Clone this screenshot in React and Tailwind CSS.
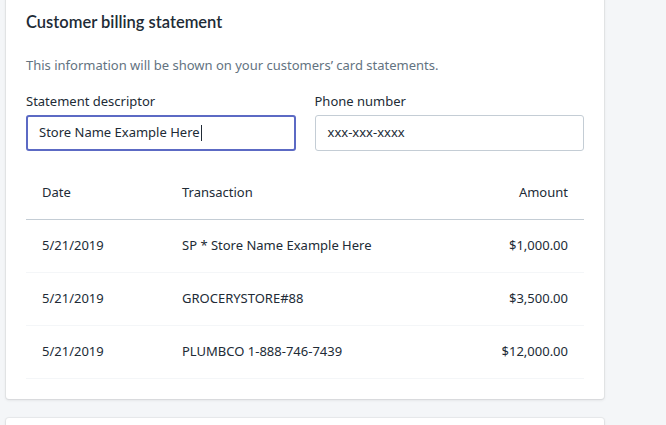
import React from 'react';

const rows = [
  { date: '5/21/2019', tx: 'SP * Store Name Example Here', amount: '$1,000.00' },
  { date: '5/21/2019', tx: 'GROCERYSTORE#88', amount: '$3,500.00' },
  { date: '5/21/2019', tx: 'PLUMBCO 1-888-746-7439', amount: '$12,000.00' },
];

function App() {
  return (
    <div
      className="h-screen bg-[#f4f6f8] overflow-hidden text-[#212b36]"
      style={{ fontFamily: '"Noto Sans", "Open Sans", sans-serif' }}
    >
      <div className="ml-[6px] w-[598px] -mt-[8px] bg-white rounded-[3px] shadow-[0_0_0_1px_rgba(63,63,68,0.05),0_1px_3px_0_rgba(63,63,68,0.15)] px-5 pt-5 pb-5">
        <h2 className="text-[16.5px] leading-5 font-semibold" style={{ fontFamily: 'Lato, "Noto Sans", sans-serif' }}>
          Customer billing statement
        </h2>
        <p className="mt-[23px] text-[13px] leading-5 text-[#637381]">
          This information will be shown on your customers’ card statements.
        </p>
        <div className="mt-[16px] grid grid-cols-2 gap-[19px]">
          <label className="block">
            <span className="block text-[13px] leading-5">Statement descriptor</span>
            <div className="mt-[4px] h-9 flex items-center pl-[11px] pr-3 border-2 border-[#5c6ac4] rounded-[3px] text-[13px]">
              Store Name Example Here
              <span className="ml-px w-px h-4 bg-[#212b36]" />
            </div>
          </label>
          <label className="block">
            <span className="block text-[13px] leading-5">Phone number</span>
            <div className="mt-[4px] h-9 flex items-center px-3 border border-[#c4cdd5] rounded-[3px] text-[13px]">
              xxx-xxx-xxxx
            </div>
          </label>
        </div>
        <table className="mt-[16px] w-full text-[13px] border-collapse">
          <thead>
            <tr className="border-b border-[#c4cdd5]">
              <th className="h-[52px] px-4 text-left font-normal w-[140px]">Date</th>
              <th className="h-[52px] px-4 text-left font-normal">Transaction</th>
              <th className="h-[52px] px-4 text-right font-normal">Amount</th>
            </tr>
          </thead>
          <tbody>
            {rows.map((r, i) => (
              <tr key={i} className="border-b border-[#f4f6f8]">
                <td className="h-[53px] px-4">{r.date}</td>
                <td className="h-[53px] px-4">{r.tx}</td>
                <td className="h-[53px] px-4 text-right">{r.amount}</td>
              </tr>
            ))}
          </tbody>
        </table>
      </div>
      <div className="ml-[6px] w-[598px] mt-[19px] h-[60px] bg-white rounded-[3px] shadow-[0_0_0_1px_rgba(63,63,68,0.05),0_1px_3px_0_rgba(63,63,68,0.15)]" />
    </div>
  );
}

export default App;
